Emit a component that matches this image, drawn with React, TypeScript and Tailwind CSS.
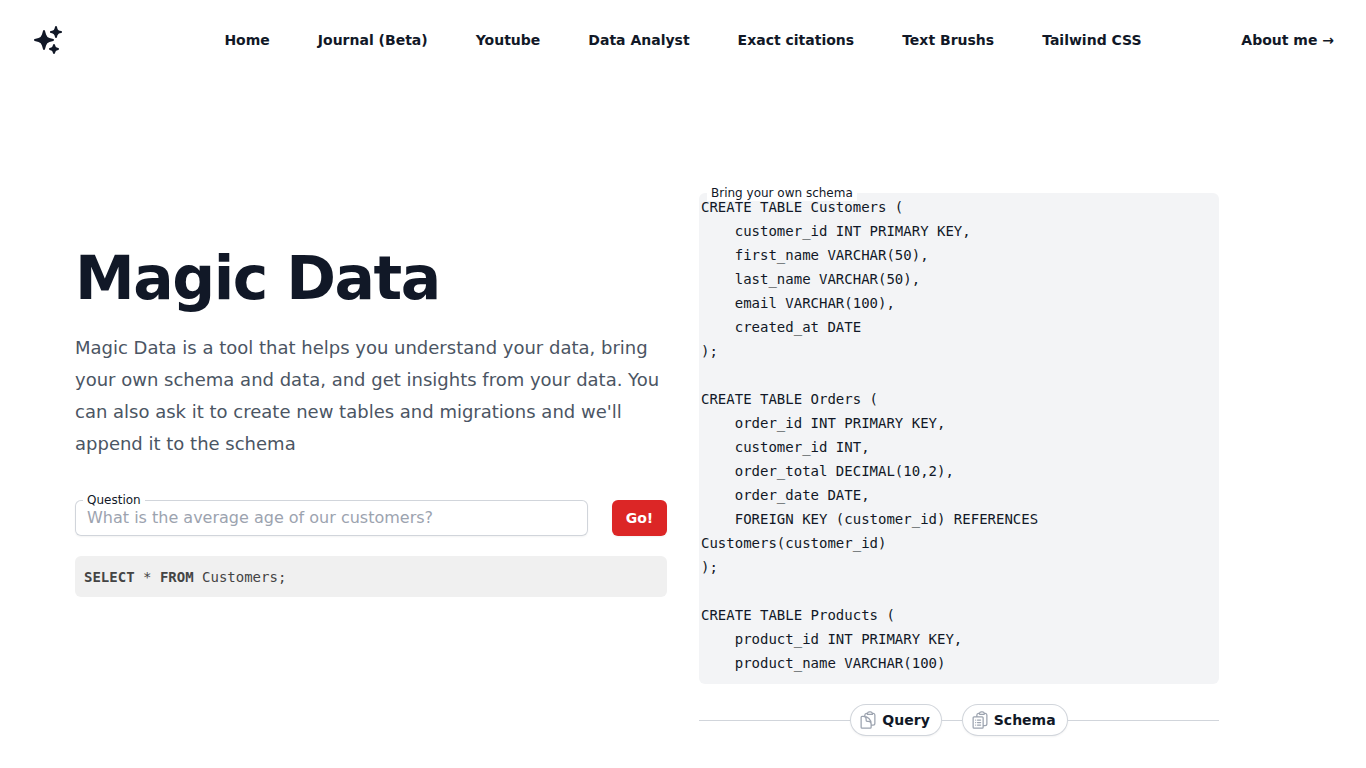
const navLinks = ['Home', 'Journal (Beta)', 'Youtube', 'Data Analyst', 'Exact citations', 'Text Brushs', 'Tailwind CSS'];

const schema = `CREATE TABLE Customers (
    customer_id INT PRIMARY KEY,
    first_name VARCHAR(50),
    last_name VARCHAR(50),
    email VARCHAR(100),
    created_at DATE
);

CREATE TABLE Orders (
    order_id INT PRIMARY KEY,
    customer_id INT,
    order_total DECIMAL(10,2),
    order_date DATE,
    FOREIGN KEY (customer_id) REFERENCES Customers(customer_id)
);

CREATE TABLE Products (
    product_id INT PRIMARY KEY,
    product_name VARCHAR(100)`;

function SparklesIcon() {
  return (
    <svg viewBox="0 0 24 24" fill="currentColor" className="h-8 w-8 text-[#111827]">
      <path
        fillRule="evenodd"
        clipRule="evenodd"
        d="M9 4.5a.75.75 0 0 1 .721.544l.813 2.846a3.75 3.75 0 0 0 2.576 2.576l2.846.813a.75.75 0 0 1 0 1.442l-2.846.813a3.75 3.75 0 0 0-2.576 2.576l-.813 2.846a.75.75 0 0 1-1.442 0l-.813-2.846a3.75 3.75 0 0 0-2.576-2.576l-2.846-.813a.75.75 0 0 1 0-1.442l2.846-.813A3.75 3.75 0 0 0 7.466 7.89l.813-2.846A.75.75 0 0 1 9 4.5ZM18 1.5a.75.75 0 0 1 .728.568l.258 1.036c.236.94.97 1.674 1.91 1.91l1.036.258a.75.75 0 0 1 0 1.456l-1.036.258c-.94.236-1.674.97-1.91 1.91l-.258 1.036a.75.75 0 0 1-1.456 0l-.258-1.036a2.625 2.625 0 0 0-1.91-1.91l-1.036-.258a.75.75 0 0 1 0-1.456l1.036-.258a2.625 2.625 0 0 0 1.91-1.91l.258-1.036A.75.75 0 0 1 18 1.5ZM16.5 15a.75.75 0 0 1 .712.513l.394 1.183c.15.447.5.799.948.948l1.183.395a.75.75 0 0 1 0 1.422l-1.183.395c-.447.15-.799.5-.948.948l-.395 1.183a.75.75 0 0 1-1.422 0l-.395-1.183a1.5 1.5 0 0 0-.948-.948l-1.183-.395a.75.75 0 0 1 0-1.422l1.183-.395c.447-.15.799-.5.948-.948l.395-1.183A.75.75 0 0 1 16.5 15Z"
      />
    </svg>
  );
}

function ClipboardIcon({ d }: { d: string }) {
  return (
    <svg viewBox="0 0 24 24" fill="none" stroke="currentColor" strokeWidth={1.5} strokeLinecap="round" strokeLinejoin="round" className="h-5 w-5 text-[#9ca3af]">
      <path d={d} />
    </svg>
  );
}

const queryIcon =
  'M8.25 7.5V6.108c0-1.135.845-2.098 1.976-2.192.373-.03.748-.057 1.123-.08M15.75 18H18a2.25 2.25 0 0 0 2.25-2.25V6.108c0-1.135-.845-2.098-1.976-2.192a48.424 48.424 0 0 0-1.123-.08M15.75 18.75v-1.875a3.375 3.375 0 0 0-3.375-3.375h-1.5a1.125 1.125 0 0 1-1.125-1.125v-1.5A3.375 3.375 0 0 0 6.375 7.5H5.25m11.9-3.664A2.251 2.251 0 0 0 15 2.25h-1.5a2.251 2.251 0 0 0-2.15 1.586m5.8 0c.065.21.1.433.1.664v.75h-6V4.5c0-.231.035-.454.1-.664M6.75 7.5H4.875c-.621 0-1.125.504-1.125 1.125v12c0 .621.504 1.125 1.125 1.125h9.75c.621 0 1.125-.504 1.125-1.125V16.5a9 9 0 0 0-9-9Z';
const schemaIcon =
  'M9 12h3.75M9 15h3.75M9 18h3.75m3 .75H18a2.25 2.25 0 0 0 2.25-2.25V6.108c0-1.123-.845-2.084-1.976-2.192a48.424 48.424 0 0 0-1.123-.08m-5.801 0c-.065.21-.1.433-.1.664 0 .414.336.75.75.75h4.5a.75.75 0 0 0 .75-.75 2.25 2.25 0 0 0-.1-.664m-5.8 0A2.251 2.251 0 0 1 13.5 2.25H15c1.012 0 1.867.668 2.15 1.586m-5.8 0c-.376.023-.75.05-1.124.08C9.095 4.01 8.25 4.973 8.25 6.108V8.25m0 0H4.875c-.621 0-1.125.504-1.125 1.125v11.25c0 .621.504 1.125 1.125 1.125h9.75c.621 0 1.125-.504 1.125-1.125V9.375c0-.621-.504-1.125-1.125-1.125H8.25ZM6.75 12h.008v.008H6.75V12Zm0 3h.008v.008H6.75V15Zm0 3h.008v.008H6.75V18Z';

function TabButton({ label, icon }: { label: string; icon: string }) {
  return (
    <button type="button" className="inline-flex h-8 items-center gap-1 rounded-full bg-white pl-2 pr-3 text-sm font-semibold text-[#111827] shadow-xs ring-1 ring-inset ring-[#d1d5db]">
      <ClipboardIcon d={icon} />
      {label}
    </button>
  );
}

export default function App() {
  return (
    <div className="min-h-screen bg-white font-['DejaVu_Sans',sans-serif] text-[#111827]">
      <header className="flex items-center justify-between p-6 px-8">
        <div className="flex flex-1">
          <SparklesIcon />
        </div>
        <nav className="flex gap-x-12">
          {navLinks.map((link) => (
            <a key={link} href="#" className="text-sm font-semibold leading-6 text-[#111827]">
              {link}
            </a>
          ))}
        </nav>
        <div className="flex flex-1 justify-end">
          <a href="#" className="text-sm font-semibold leading-6 text-[#111827]">
            About me <span>→</span>
          </a>
        </div>
      </header>

      <main className="flex gap-8 pl-[75px] pt-[113px]">
        <section className="mt-[55px] w-[592px]">
          <h1 className="text-6xl font-bold tracking-tight text-[#111827]">Magic Data</h1>
          <p className="mt-6 text-lg leading-8 text-[#4b5563]">
            Magic Data is a tool that helps you understand your data, bring your own schema and data, and get insights from your data. You can also ask it to create new tables and migrations and we'll append it to the schema
          </p>
          <div className="mt-10 flex gap-6">
            <div className="relative flex-1">
              <label className="absolute -top-2 left-2 bg-white px-1 text-xs leading-4 text-[#111827]">Question</label>
              <input
                type="text"
                placeholder="What is the average age of our customers?"
                className="block h-9 w-full rounded-md border-0 px-3 pb-0.5 text-base text-[#111827] shadow-xs outline-none ring-1 ring-inset ring-[#d1d5db] placeholder:text-[#9ca3af]"
              />
            </div>
            <button type="button" className="h-9 w-[55px] rounded-md bg-[#dc2626] text-sm font-semibold text-white shadow-xs">
              Go!
            </button>
          </div>
          <pre className="mt-5 rounded-md bg-[#f0f0f0] px-[9px] pb-2 pt-2.5 font-['DejaVu_Sans_Mono',monospace] text-sm leading-[23px] text-[#444444]">
            <span className="font-bold">SELECT</span> * <span className="font-bold">FROM</span> Customers;
          </pre>
        </section>

        <section className="w-[520px]">
          <div className="relative">
            <label className="absolute -top-2 left-2 bg-white px-1 text-xs leading-4 text-[#111827]">Bring your own schema</label>
            <div className="h-[491px] overflow-hidden whitespace-pre-wrap rounded-md bg-[#f3f4f6] p-0.5 font-['DejaVu_Sans_Mono',monospace] text-sm leading-6 text-[#111827]">
              {schema}
            </div>
          </div>
          <div className="mt-5 flex items-center">
            <div className="h-px flex-1 bg-[#d1d5db]" />
            <TabButton label="Query" icon={queryIcon} />
            <div className="h-px w-5 bg-[#d1d5db]" />
            <TabButton label="Schema" icon={schemaIcon} />
            <div className="h-px flex-1 bg-[#d1d5db]" />
          </div>
        </section>
      </main>
    </div>
  );
}
